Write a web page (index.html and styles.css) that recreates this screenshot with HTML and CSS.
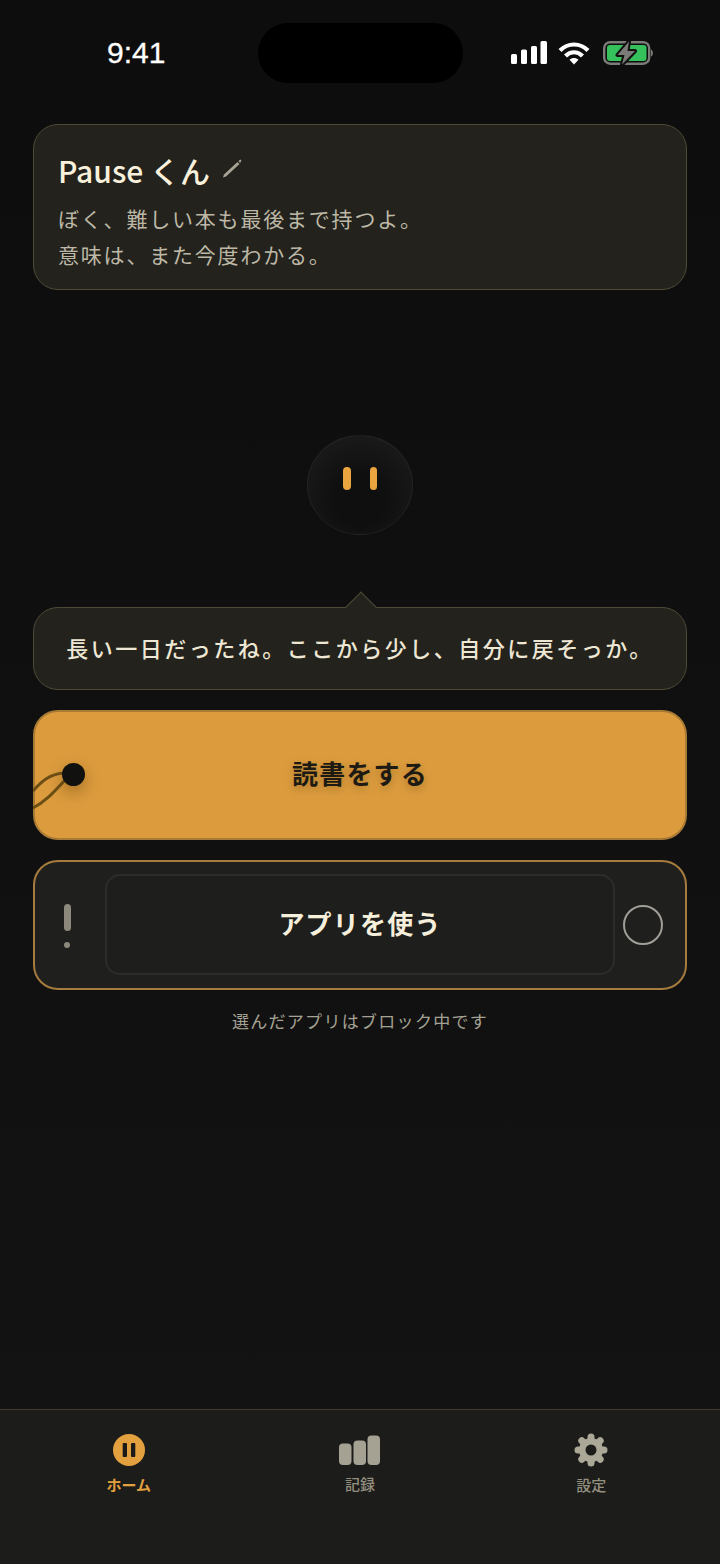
FILE: index.html
```html
<!DOCTYPE html>
<html lang="ja">
<head>
  <meta charset="UTF-8">
  <title>Pause</title>
  <link rel="stylesheet" href="styles.css">
</head>
<body>
  <div class="status-bar">
    <span class="time">9:41</span>
    <div class="island"></div>
    <div class="status-icons">
      <svg width="36" height="24" viewBox="0 0 36 24" fill="#fff">
        <rect x="0" y="13" width="6" height="10" rx="1.5"/>
        <rect x="10" y="8.5" width="6" height="14.5" rx="1.5"/>
        <rect x="20" y="5" width="6" height="18" rx="1.5"/>
        <rect x="29.500" y="0" width="6.500" height="23" rx="1.500"/>
      </svg>
      <svg class="wifi" width="32" height="24" viewBox="0 0 32 24" fill="none" stroke="#fff" stroke-width="4.200">
        <path d="M2 9.500C10 1.500 22 1.500 30 9.500"/>
        <path d="M7.500 15C12.500 10 19.500 10 24.500 15"/>
        <path d="M16 23.500 L11.500 18.800C14 16.400 18 16.400 20.500 18.800Z" fill="#fff" stroke="none"/>
      </svg>
      <svg class="battery" width="51" height="26" viewBox="0 0 51 26">
        <rect x="1.200" y="2.200" width="45" height="21.500" rx="6" fill="none" stroke="#7b7b78" stroke-width="2.400"/>
        <rect x="4" y="5" width="39.500" height="16" rx="3" fill="#35c25c"/>
        <path d="M48 9.500C50.500 10.500 50.500 15.500 48 16.500Z" fill="#7b7b78"/>
        <path d="M26 1.500 L14.500 15 L21.500 15 L19 24.500 L32 11 L24.500 11Z" fill="#7b7b78" stroke="#101010" stroke-width="4" stroke-linejoin="round" paint-order="stroke"/>
      </svg>
    </div>
  </div>

  <main class="content">
    <section class="name-card">
      <h1 class="name">Pause くん
        <svg class="pencil" width="20" height="20" viewBox="0 0 20 20">
          <path d="M1 18.500 L2 15.500 L15.500 3 L17.500 5 L4 17.500Z" fill="#a9a595"/>
          <path d="M16.500 2 L18.500 0.500 L19.500 1.500 L18 4Z" fill="#a9a595"/>
        </svg>
      </h1>
      <p class="bio">ぼく、難しい本も最後まで持つよ。<br>意味は、また今度わかる。</p>
    </section>

    <div class="face">
      <span class="eye"></span>
      <span class="eye"></span>
    </div>

    <div class="bubble">
      <span class="bubble-tail"></span>
      長い一日だったね。ここから少し、自分に戻そっか。
    </div>

    <button class="btn-read">
      <svg class="string" width="42" height="62" viewBox="0 0 42 62" fill="none" stroke="#6d4f16" stroke-width="3">
        <path d="M0 42C8 33 16 25 31 24"/>
        <path d="M0 59C12 53 20 44 32 31"/>
      </svg>
      <span class="pin"></span>
      読書をする
    </button>

    <div class="btn-apps">
      <div class="alert-mark">
        <span class="alert-bar"></span>
        <span class="alert-dot"></span>
      </div>
      <div class="apps-label">アプリを使う</div>
      <span class="radio"></span>
    </div>

    <p class="note">選んだアプリはブロック中です</p>
  </main>

  <nav class="tab-bar">
    <a class="tab tab-active">
      <svg width="32" height="32" viewBox="0 0 32 32">
        <circle cx="16" cy="16" r="16" fill="#e3a03f"/>
        <rect x="9.700" y="9" width="4.300" height="14" rx="1" fill="#1a1a18"/>
        <rect x="18" y="9" width="4.300" height="14" rx="1" fill="#1a1a18"/>
      </svg>
      <span>ホーム</span>
    </a>
    <a class="tab tab-chart">
      <svg width="41" height="32" viewBox="0 0 41 32" fill="#a5a193">
        <rect x="0" y="9.500" width="12.500" height="21.500" rx="4"/>
        <rect x="14.500" y="6.500" width="12.500" height="24.500" rx="4"/>
        <rect x="28.500" y="1.500" width="12.500" height="29.500" rx="4"/>
      </svg>
      <span>記録</span>
    </a>
    <a class="tab tab-gear">
      <svg width="34" height="34" viewBox="0 0 34 34">
        <g stroke="#aca898" stroke-width="7" stroke-linecap="round">
          <path d="M17 4V30"/>
          <path d="M4 17H30"/>
          <path d="M7.800 7.800L26.200 26.200"/>
          <path d="M26.200 7.800L7.800 26.200"/>
        </g>
        <circle cx="17" cy="17" r="12" fill="#aca898"/>
        <circle cx="17" cy="17" r="5.500" fill="#1c1c1a"/>
      </svg>
      <span>設定</span>
    </a>
  </nav>
</body>
</html>
```

FILE: styles.css
```css
* { box-sizing: border-box; }

body {
  margin: 0;
  height: 1564px;
  display: flex;
  flex-direction: column;
  background: linear-gradient(#0d0d0d, #131313);
  font-family: "Noto Sans CJK JP", "Noto Sans", sans-serif;
  color: #f6efdc;
}

.status-bar {
  height: 124px;
  padding: 23px 66px 0 107px;
  display: flex;
  align-items: flex-start;
}
.time {
  width: 151px;
  margin-top: 12px;
  font: 30px/36px "Liberation Sans", sans-serif;
  -webkit-text-stroke: 0.3px #fff;
  color: #fff;
}
.island { width: 205px; height: 60px; border-radius: 30px; background: #000; }
.status-icons { display: flex; gap: 11px; margin: 18px 0 0 auto; }
.status-icons svg { display: block; }
.wifi { margin-right: 2px; }
.battery { margin-top: -1px; }

.content { flex: 1; padding: 0 33px; }

.name-card {
  height: 166px;
  padding: 25px 24px 0;
  background: #23221d;
  border: 1.500px solid #4f4a35;
  border-radius: 25px;
}
.name {
  margin: 0;
  display: flex;
  align-items: center;
  gap: 12px;
  font-size: 30px;
  line-height: 40px;
  font-weight: 500;
  color: #f9f1dc;
}
.pencil { margin-top: -3px; }
.bio {
  margin: 10px 0 0;
  font-size: 21px;
  line-height: 36px;
  letter-spacing: 1.800px;
  color: #bdb8a6;
}

.face {
  width: 106px;
  height: 100px;
  margin: 145px auto 72px;
  padding-top: 31px;
  display: flex;
  justify-content: center;
  gap: 19px;
  border-radius: 50%;
  background: radial-gradient(circle at 50% 65%, #0f0f0f 30%, #191919 75%, #222 100%);
  border: 1px solid rgba(255, 255, 255, 0.05);
}
.eye { width: 7.500px; height: 23px; border-radius: 4px; background: #eba53e; }

.bubble {
  position: relative;
  height: 83px;
  padding-top: 23px;
  text-align: center;
  font-size: 22px;
  line-height: 32px;
  font-weight: 500;
  letter-spacing: 2.500px;
  white-space: nowrap;
  color: #eee7d4;
  background: #23221d;
  border: 1.500px solid #4f4a35;
  border-radius: 25px;
}
.bubble-tail {
  position: absolute;
  top: -12.500px;
  left: 316px;
  width: 22px;
  height: 22px;
  background: #23221d;
  border-top: 1.500px solid #4f4a35;
  border-left: 1.500px solid #4f4a35;
  transform: rotate(45deg);
}

.btn-read {
  position: relative;
  display: block;
  width: 100%;
  height: 130px;
  margin-top: 20px;
  padding: 0 0 5px;
  font-family: inherit;
  font-size: 26px;
  font-weight: 700;
  letter-spacing: 1.200px;
  color: #1d1a13;
  text-shadow: 0 3px 8px rgba(90, 55, 0, 0.35);
  background: #dc9c3e;
  border: 2px solid #a97a34;
  border-radius: 25px;
}
.pin {
  position: absolute;
  top: 51px;
  left: 27px;
  width: 23px;
  height: 23px;
  border-radius: 50%;
  background: #111110;
  box-shadow: 0 6px 16px rgba(90, 55, 0, 0.45);
}
.string { position: absolute; top: 37px; left: -2px; }

.btn-apps {
  height: 130px;
  margin-top: 20px;
  padding: 12px 22px 13px 25px;
  display: flex;
  align-items: center;
  background: #1f1f1d;
  border: 2px solid #a67c3e;
  border-radius: 25px;
}
.alert-mark {
  width: 14px;
  display: flex;
  flex-direction: column;
  align-items: center;
  gap: 11px;
  margin-top: 3px;
}
.alert-bar { width: 7px; height: 27px; border-radius: 4px; background: #8c887b; }
.alert-dot { width: 6px; height: 6px; border-radius: 50%; background: #8c887b; }
.apps-label {
  flex: 1;
  height: 101px;
  margin: 0 8px 0 31px;
  padding-bottom: 4px;
  display: flex;
  align-items: center;
  justify-content: center;
  font-size: 26px;
  font-weight: 700;
  letter-spacing: 1.200px;
  background: #1e1e1c;
  border: 2px solid #2c2c2a;
  border-radius: 15px;
}
.radio { width: 40px; height: 40px; border-radius: 50%; border: 2px solid #a09e96; }

.note {
  margin: 19px 0 0;
  text-align: center;
  font-size: 17px;
  line-height: 24px;
  letter-spacing: 1.300px;
  color: #a5a193;
}

.tab-bar {
  height: 155px;
  padding: 24px 13px 0;
  display: grid;
  grid-template-columns: repeat(3, 1fr);
  background: #1c1c1a;
  border-top: 1.500px solid #3f3a2c;
}
.tab {
  height: 62px;
  display: flex;
  flex-direction: column;
  align-items: center;
  justify-content: space-between;
  font-size: 15px;
  line-height: 22px;
  font-weight: 500;
  color: #94907f;
}
.tab svg { display: block; }
.tab-active { color: #e3a03f; font-weight: 700; }
.tab-chart { height: 61px; }
.tab-gear svg { margin-top: -1px; }
```
